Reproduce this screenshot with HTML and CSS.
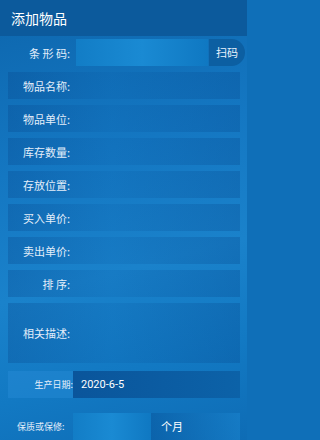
FILE: index.html
```html
<!DOCTYPE html>
<html lang="zh">
<head>
<meta charset="utf-8">
<link rel="stylesheet" href="styles.css">
</head>
<body>
<div class="app">
  <div class="titlebar">添加物品</div>
  <div class="form">
    <div class="row">
      <div class="label">条 形 码:</div>
      <div class="input light"></div>
      <div class="scan">扫码</div>
    </div>
    <div class="row band"><div class="label">物品名称:</div></div>
    <div class="row band"><div class="label">物品单位:</div></div>
    <div class="row band"><div class="label">库存数量:</div></div>
    <div class="row band"><div class="label">存放位置:</div></div>
    <div class="row band"><div class="label">买入单价:</div></div>
    <div class="row band"><div class="label">卖出单价:</div></div>
    <div class="row band"><div class="label">排 序:</div></div>
    <div class="row band tall"><div class="label">相关描述:</div></div>
    <div class="row date">
      <div class="label small lab-bg">生产日期:</div>
      <div class="input dark value">2020-6-5</div>
    </div>
    <div class="row warranty">
      <div class="label small left">保质或保修:</div>
      <div class="input light mid"></div>
      <div class="unit">个月</div>
    </div>
  </div>
</div>
</body>
</html>
```
FILE: styles.css
```css
html, body {
  margin: 0;
  padding: 0;
}
html {
  background: #0f6fb8;
}
body {
  width: 247px;
  height: 440px;
  overflow: hidden;
  font-family: "Noto Sans CJK SC", "Noto Sans", sans-serif;
  color: #e8f2fb;
  background: linear-gradient(165deg, #0d66ad 0%, #1477c2 35%, #1a82cb 60%, #1279c3 80%, #0e6cb5 100%);
}
.app {
  display: flex;
  flex-direction: column;
  height: 440px;
}
.titlebar {
  height: 38px;
  line-height: 36px;
  padding-left: 11px;
  font-size: 14px;
  color: #ffffff;
  background: #0c5a9c;
}
.form {
  display: flex;
  flex-direction: column;
  gap: 6px;
  padding: 3px 7px 0 8px;
}
.row {
  display: flex;
  align-items: center;
  height: 27px;
}
.band {
  background: linear-gradient(90deg, rgba(6, 70, 140, 0.3) 0%, rgba(10, 95, 170, 0.2) 45%, rgba(6, 75, 145, 0.32) 100%);
}
.tall {
  height: 60px;
}
.label {
  width: 62px;
  flex: none;
  text-align: right;
  font-size: 11px;
  color: #e3eefa;
  white-space: nowrap;
}
.label.small {
  font-size: 9px;
  height: 27px;
  line-height: 27px;
}
.lab-bg {
  width: 65px;
  background: rgba(40, 140, 215, 0.45);
}
.label.left {
  text-align: left;
  padding-left: 9px;
  width: 56px;
}
.input {
  height: 27px;
}
.input.light {
  width: 132px;
  margin-left: 6px;
  background: linear-gradient(90deg, #127dc6 0%, #1a8ad3 50%, #0f78c2 100%);
}
.scan {
  width: 36px;
  height: 27px;
  margin-right: -5px;
  margin-left: 1px;
  border-radius: 0 14px 14px 0;
  background: #0c5fa2;
  font-size: 11px;
  line-height: 27px;
  text-align: center;
  color: #e8f2fb;
}
.date {
  margin-top: 2px;
}
.input.dark {
  flex: 1;
  background: linear-gradient(90deg, #0a559b 0%, #0c62a8 100%);
}
.value {
  font-family: "Roboto", "Noto Sans", sans-serif;
  font-size: 11px;
  line-height: 27px;
  padding-left: 8px;
  color: #ffffff;
}
.warranty {
  margin-top: 9px;
}
.input.mid {
  width: 78px;
  margin-left: 0;
}
.unit {
  flex: 1;
  height: 27px;
  line-height: 27px;
  padding-left: 10px;
  font-size: 11px;
  color: #ffffff;
  background: linear-gradient(90deg, rgba(6, 80, 150, 0.4), rgba(30, 140, 215, 0.4));
}
```
